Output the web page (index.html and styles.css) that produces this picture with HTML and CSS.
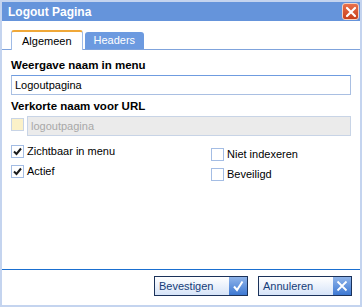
FILE: index.html
```html
<!DOCTYPE html>
<html lang="en">
<head>
    <meta charset="UTF-8">
    <title>Logout Pagina</title>
    <link rel="stylesheet" href="styles.css">
</head>
<body>
    <div class="window">
        <div class="titlebar">
            <span class="title">Logout Pagina</span>
            <div class="close-button">
                <svg width="12" height="12" viewBox="0 0 12 12"><path d="M2 2 L10 10 M10 2 L2 10" stroke="#fff" stroke-width="2.2" stroke-linecap="round"/></svg>
            </div>
        </div>
        <div class="tabs">
            <div class="tab tab-active">Algemeen</div>
            <div class="tab">Headers</div>
        </div>
        <div class="panel">
            <div class="field-label">Weergave naam in menu</div>
            <input class="text-input" type="text" value="Logoutpagina">
            <div class="field-label">Verkorte naam voor URL</div>
            <div class="url-row">
                <span class="checkbox checkbox-disabled"></span>
                <input class="text-input input-disabled" type="text" value="logoutpagina" disabled>
            </div>
            <div class="options">
                <div class="option-column">
                    <label class="option"><span class="checkbox checked"><svg width="9" height="9" viewBox="0 0 9 9"><path d="M1 4.5 L3.5 7 L8 1.5" fill="none" stroke="#1c1c1c" stroke-width="2"/></svg></span>Zichtbaar in menu</label>
                    <label class="option"><span class="checkbox checked"><svg width="9" height="9" viewBox="0 0 9 9"><path d="M1 4.5 L3.5 7 L8 1.5" fill="none" stroke="#1c1c1c" stroke-width="2"/></svg></span>Actief</label>
                </div>
                <div class="option-column column-right">
                    <label class="option"><span class="checkbox"></span>Niet indexeren</label>
                    <label class="option"><span class="checkbox"></span>Beveiligd</label>
                </div>
            </div>
        </div>
        <div class="footer">
            <button class="dialog-button">
                <span class="button-text">Bevestigen</span>
                <span class="button-icon"><svg width="12" height="12" viewBox="0 0 12 12"><path d="M2 6.5 L5 10 L10.5 1.5" fill="none" stroke="#fff" stroke-width="2"/></svg></span>
            </button>
            <button class="dialog-button">
                <span class="button-text">Annuleren</span>
                <span class="button-icon"><svg width="12" height="12" viewBox="0 0 12 12"><path d="M1.5 1.5 L10.5 10.5 M10.5 1.5 L1.5 10.5" fill="none" stroke="#fff" stroke-width="1.8"/></svg></span>
            </button>
        </div>
    </div>
</body>
</html>
```

FILE: styles.css
```css
body {
    margin: 0;
    font-family: "Liberation Sans", Arial, sans-serif;
    font-size: 11px;
    background-color: #fff;
}
.window {
    width: 362px;
    height: 307px;
    box-sizing: border-box;
    border: 2px solid #c4d4ef;
    display: flex;
    flex-direction: column;
    background-color: #fff;
}
.titlebar {
    height: 19px;
    background-color: #6594db;
    display: flex;
    align-items: center;
    justify-content: space-between;
    padding-left: 6px;
    padding-right: 1px;
}
.title {
    color: #fff;
    font-weight: bold;
    font-size: 12px;
}
.close-button {
    width: 17px;
    height: 17px;
    box-sizing: border-box;
    border: 1px solid #f4d0c0;
    border-radius: 3px;
    background: linear-gradient(#e8704c, #c8401c);
    display: flex;
    align-items: center;
    justify-content: center;
}
.tabs {
    display: flex;
    align-items: flex-end;
    gap: 2px;
    margin-top: 9px;
    padding-left: 9px;
    border-bottom: 1px solid #7fa3dc;
    height: 19px;
}
.tab {
    height: 17px;
    box-sizing: border-box;
    padding: 0 9px;
    background-color: #6c9ae0;
    color: #fff;
    font-size: 11px;
    line-height: 17px;
    border-radius: 3px 3px 0 0;
}
.tab-active {
    height: 20px;
    margin-bottom: -1px;
    background-color: #fff;
    color: #000;
    border: 1px solid #9fbbe6;
    border-top: 2px solid #f0a838;
    border-bottom: none;
    line-height: 18px;
    padding: 0 10px;
}
.panel {
    flex: 1;
    padding: 8px 9px 0 9px;
}
.field-label {
    font-weight: bold;
    font-size: 11.5px;
    height: 14px;
    line-height: 14px;
}
.text-input {
    display: block;
    width: 100%;
    height: 20px;
    box-sizing: border-box;
    margin: 3px 0 4px 0;
    border: 1px solid #a9bfe2;
    border-top-color: #6f9ce0;
    padding: 0 3px;
    font-family: "Liberation Sans", Arial, sans-serif;
    font-size: 11px;
    color: #000;
    background-color: #fff;
}
.url-row {
    display: flex;
    align-items: center;
    gap: 3px;
}
.url-row .text-input {
    flex: 1;
    margin: 3px 0 0 0;
}
.input-disabled {
    background-color: #ebebeb;
    border-color: #c8d4e6;
    color: #a8a8a8;
}
.checkbox {
    width: 13px;
    height: 13px;
    box-sizing: border-box;
    border: 1px solid #a4bde4;
    background-color: #fff;
    display: inline-flex;
    align-items: center;
    justify-content: center;
    flex-shrink: 0;
}
.checkbox-disabled {
    background-color: #fbf1c8;
    border-color: #c8d4e6;
}
.options {
    display: flex;
    margin-top: 8px;
}
.option-column {
    display: flex;
    flex-direction: column;
    gap: 6px;
    width: 200px;
    flex-shrink: 0;
}
.column-right {
    width: auto;
    margin-top: 3px;
}
.option {
    display: flex;
    align-items: center;
    gap: 3px;
    height: 14px;
}
.footer {
    height: 32px;
    border-top: 1px solid #1a6fd0;
    margin-bottom: 3px;
    display: flex;
    justify-content: flex-end;
    align-items: center;
    gap: 10px;
    padding-right: 8px;
}
.dialog-button {
    width: 94px;
    height: 20px;
    padding: 0;
    border: 1px solid #1b325a;
    background: linear-gradient(#ffffff, #d6e4f8);
    display: flex;
    align-items: stretch;
    cursor: pointer;
    font-family: "Liberation Sans", Arial, sans-serif;
}
.button-text {
    flex: 1;
    text-align: left;
    padding-left: 4px;
    line-height: 18px;
    font-size: 11px;
    color: #163c78;
}
.button-icon {
    width: 18px;
    background: linear-gradient(#8fb4ea, #3d78d2);
    display: flex;
    align-items: center;
    justify-content: center;
}
```
